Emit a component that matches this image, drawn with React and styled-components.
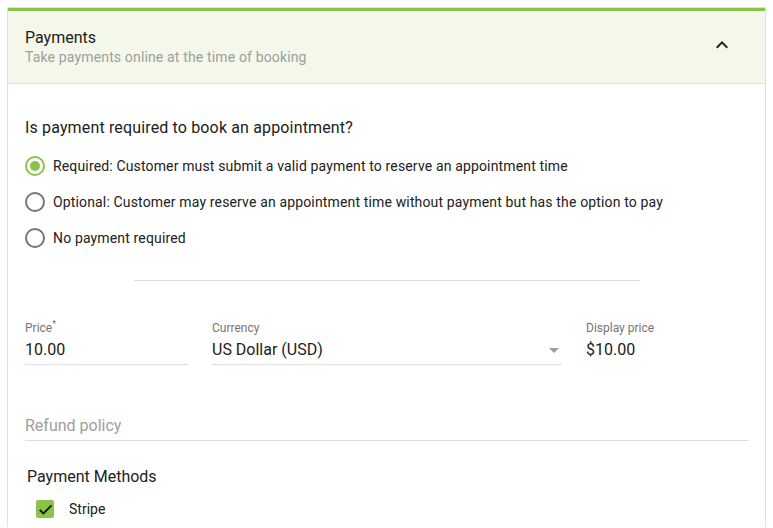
import React, { useState } from 'react';
import styled, { createGlobalStyle } from 'styled-components';

const GlobalStyle = createGlobalStyle`
  body {
    margin: 0;
    background: #fff;
    font-family: Roboto, "Noto Sans", Arial, sans-serif;
    color: rgba(0, 0, 0, 0.87);
  }
`;

const paymentOptions = [
  { id: 'required', label: 'Required: Customer must submit a valid payment to reserve an appointment time' },
  { id: 'optional', label: 'Optional: Customer may reserve an appointment time without payment but has the option to pay' },
  { id: 'none', label: 'No payment required' }
];

const App = () => {
  const [choice, setChoice] = useState('required');
  const [stripe, setStripe] = useState(true);

  return (
    <>
      <GlobalStyle />
      <Card>
        <Header>
          <HeaderText>
            <Title>Payments</Title>
            <Subtitle>Take payments online at the time of booking</Subtitle>
          </HeaderText>
          <ChevronButton aria-label="Collapse">
            <svg width="24" height="24" viewBox="0 0 24 24">
              <path d="M12 8l-6 6 1.41 1.41L12 10.83l4.59 4.58L18 14z" fill="#212121" />
            </svg>
          </ChevronButton>
        </Header>

        <Body>
          <Question>Is payment required to book an appointment?</Question>
          <RadioList>
            {paymentOptions.map((opt) => (
              <RadioRow key={opt.id} onClick={() => setChoice(opt.id)}>
                <RadioCircle $checked={choice === opt.id} />
                <RadioLabel>{opt.label}</RadioLabel>
              </RadioRow>
            ))}
          </RadioList>

          <Divider />

          <FieldRow>
            <Field $width="163px">
              <FieldLabel>Price<sup>*</sup></FieldLabel>
              <FieldValue>10.00</FieldValue>
            </Field>
            <Field $width="350px">
              <FieldLabel>Currency</FieldLabel>
              <FieldValue>
                US Dollar (USD)
                <Caret />
              </FieldValue>
            </Field>
            <StaticField>
              <FieldLabel>Display price</FieldLabel>
              <FieldValue>$10.00</FieldValue>
            </StaticField>
          </FieldRow>

          <RefundField>Refund policy</RefundField>

          <SectionTitle>Payment Methods</SectionTitle>
          <CheckRow onClick={() => setStripe(!stripe)}>
            <CheckBox $checked={stripe}>
              {stripe && (
                <svg width="17" height="17" viewBox="0 0 24 24">
                  <path d="M9 16.17L4.83 12l-1.42 1.41L9 19 21 7l-1.41-1.41z" fill="#111" stroke="#111" strokeWidth="0.8" />
                </svg>
              )}
            </CheckBox>
            <CheckLabel>Stripe</CheckLabel>
          </CheckRow>
        </Body>
      </Card>
    </>
  );
};

const Card = styled.div`
  margin: 7px 7px 0 7px;
  border: 1px solid #e0e0e0;
  border-bottom: none;
  min-height: 520px;
  box-sizing: border-box;
`;

const Header = styled.div`
  display: flex;
  align-items: center;
  justify-content: space-between;
  background: #f3f8ea;
  border-top: 3px solid #8bc34a;
  border-bottom: 1px solid #e0e0e0;
  padding: 17px 31px 17px 17px;
`;

const HeaderText = styled.div`
  display: flex;
  flex-direction: column;
`;

const Title = styled.div`
  font-size: 16px;
  line-height: 20px;
  color: #212121;
`;

const Subtitle = styled.div`
  font-size: 14px;
  line-height: 18px;
  letter-spacing: 0.15px;
  color: #9e9e9e;
`;

const ChevronButton = styled.div`
  width: 24px;
  height: 24px;
  display: flex;
  margin-top: -4px;
  cursor: pointer;
`;

const Body = styled.div`
  padding: 34px 16px 0 17px;
`;

const Question = styled.div`
  font-size: 16px;
  line-height: 20px;
  letter-spacing: 0.15px;
  color: #212121;
  margin-bottom: 18px;
`;

const RadioList = styled.div`
  display: flex;
  flex-direction: column;
  gap: 16px;
`;

const RadioRow = styled.div`
  display: flex;
  align-items: center;
  height: 20px;
  cursor: pointer;
`;

const RadioCircle = styled.span`
  width: 20px;
  height: 20px;
  box-sizing: border-box;
  border-radius: 50%;
  border: 2px solid ${(p) => (p.$checked ? '#8bc34a' : '#757575')};
  display: flex;
  align-items: center;
  justify-content: center;
  flex-shrink: 0;

  &::after {
    content: '';
    width: 10px;
    height: 10px;
    border-radius: 50%;
    background: #8bc34a;
    display: ${(p) => (p.$checked ? 'block' : 'none')};
  }
`;

const RadioLabel = styled.span`
  font-size: 14px;
  line-height: 20px;
  letter-spacing: 0.15px;
  margin-left: 8px;
  color: #212121;
`;

const Divider = styled.div`
  width: 70%;
  height: 1px;
  background: #e0e0e0;
  margin: 32px auto 39px;
`;

const FieldRow = styled.div`
  display: flex;
  gap: 24px;
`;

const Field = styled.div`
  width: ${(p) => p.$width};
  border-bottom: 1px solid #e0e0e0;
  padding-bottom: 3px;
`;

const StaticField = styled.div`
  flex: 1;
`;

const FieldLabel = styled.div`
  font-size: 12px;
  line-height: 16px;
  color: #757575;

  sup {
    font-size: 9px;
    line-height: 0;
    vertical-align: 5px;
  }
`;

const FieldValue = styled.div`
  position: relative;
  font-size: 16px;
  line-height: 22px;
  margin-top: 3px;
  color: #212121;
`;

const Caret = styled.span`
  position: absolute;
  right: 3px;
  top: 9px;
  width: 0;
  height: 0;
  border-left: 5px solid transparent;
  border-right: 5px solid transparent;
  border-top: 5px solid #9e9e9e;
`;

const RefundField = styled.div`
  margin-top: 50px;
  font-size: 16px;
  line-height: 22px;
  color: #9e9e9e;
  border-bottom: 1px solid #e0e0e0;
  padding-bottom: 3px;
`;

const SectionTitle = styled.div`
  margin-top: 25px;
  margin-left: 2px;
  font-size: 16px;
  line-height: 22px;
  color: #212121;
`;

const CheckRow = styled.div`
  display: flex;
  align-items: center;
  margin-top: 12px;
  margin-left: 11px;
  cursor: pointer;
`;

const CheckBox = styled.span`
  width: 18px;
  height: 18px;
  border-radius: 2px;
  background: ${(p) => (p.$checked ? '#8bc34a' : 'transparent')};
  border: ${(p) => (p.$checked ? 'none' : '2px solid #757575')};
  display: flex;
  align-items: center;
  justify-content: center;
`;

const CheckLabel = styled.span`
  font-size: 14px;
  margin-left: 15px;
  color: #212121;
`;

export default App;
